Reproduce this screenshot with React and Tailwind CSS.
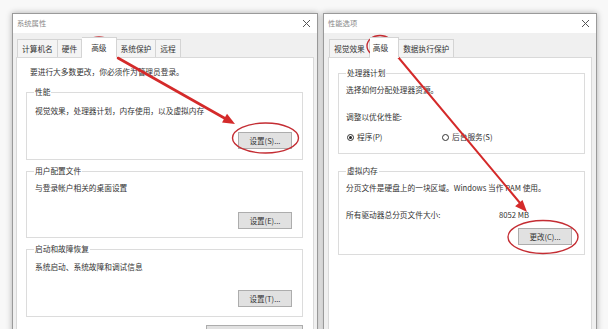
import React from 'react';

const font = "font-['Noto_Sans_CJK_SC','Noto_Sans',sans-serif]";

const CloseX = () => (
    <svg width="9" height="9" viewBox="0 0 9 9" className="shrink-0">
        <path d="M1 1 L8 8 M8 1 L1 8" stroke="#555" strokeWidth="1" />
    </svg>
);

const Tab = ({ label, active, className = '' }) => (
    <div
        className={`border border-[#d4d4d4] leading-[12px] text-[7.7px] text-[#333] whitespace-nowrap ${
            active
                ? 'bg-white border-b-white h-[21px] pt-[4px] -mb-px relative z-10'
                : 'bg-[#f4f4f4] border-b-0 h-[18px] pt-[3px] px-[4px]'
        } ${className}`}
    >
        {label}
    </div>
);

const Button = ({ label, className = '' }) => (
    <div
        className={`h-[17px] w-[54px] flex items-center justify-center bg-[#e1e1e1] border border-[#adadad] text-[7.5px] text-[#333] leading-none whitespace-nowrap ${className}`}
    >
        {label}
    </div>
);

const Group = ({ title, children, className = '' }) => (
    <fieldset className={`border border-[#dcdcdc] px-[7px] ${className}`}>
        <legend className="px-[1px] leading-[12px] text-[7.7px] text-[#333]">{title}</legend>
        {children}
    </fieldset>
);

const Line = ({ children, className = '' }) => (
    <div className={`leading-[12px] text-[7.7px] text-[#333] whitespace-nowrap ${className}`}>{children}</div>
);

const Radio = ({ checked, label }) => (
    <div className="flex items-center gap-[3px]">
        <div className="w-[7px] h-[7px] rounded-full border border-[#333] bg-white flex items-center justify-center">
            {checked && <div className="w-[3px] h-[3px] rounded-full bg-[#222]" />}
        </div>
        <Line>{label}</Line>
    </div>
);

const TitleBar = ({ title }) => (
    <div className="h-[19px] bg-white flex items-center justify-between pl-[4px] pr-[6px]">
        <span className="text-[7.3px] text-[#888] leading-none">{title}</span>
        <CloseX />
    </div>
);

const SystemProps = () => (
    <div className="w-[306px] h-[345px] shrink-0 flex flex-col border border-[#9a9a9a] bg-[#f0f0f0] shadow-[0_0_6px_rgba(0,0,0,0.3)]">
        <TitleBar title="系统属性" />
        <div className="flex-1 flex flex-col px-[3px] pt-[4px]">
            <div className="flex items-end h-[20px] pl-[1px]">
                <Tab label="计算机名" />
                <Tab label="硬件" className="border-l-0" />
                <Tab label="高级" active className="px-[9px] border-l-0" />
                <Tab label="系统保护" className="border-l-0" />
                <Tab label="远程" className="border-l-0" />
            </div>
            <div className="flex-1 bg-white border border-[#d9d9d9] flex flex-col pl-[9px] pr-[10px]">
                <Line className="mt-[8px] ml-[4px]">要进行大多数更改，你必须作为管理员登录。</Line>
                <Group title="性能" className="mt-[8px] pb-[10px]">
                    <Line className="mt-[7px] ml-px">视觉效果，处理器计划，内存使用，以及虚拟内存</Line>
                    <div className="flex justify-end mt-[15px] mr-[3px]">
                        <Button label="设置(S)..." />
                    </div>
                </Group>
                <Group title="用户配置文件" className="mt-[5px] pb-[8px]">
                    <Line className="mt-[5px] ml-px">与登录帐户相关的桌面设置</Line>
                    <div className="flex justify-end mt-[18px] mr-[3px]">
                        <Button label="设置(E)..." />
                    </div>
                </Group>
                <Group title="启动和故障恢复" className="mt-[5px] pb-[9px]">
                    <Line className="mt-[6px] ml-px">系统启动、系统故障和调试信息</Line>
                    <div className="flex justify-end mt-[17px] mr-[3px]">
                        <Button label="设置(T)..." />
                    </div>
                </Group>
                {/* only the top edge of this button shows in the shot */}
                <div className="flex justify-end mt-[8px]">
                    <div className="h-[17px] w-[97px] bg-[#e1e1e1] border border-[#adadad]" />
                </div>
            </div>
        </div>
    </div>
);

const PerfOptions = () => (
    <div className="w-[274px] h-[345px] shrink-0 flex flex-col border border-[#9a9a9a] bg-[#f0f0f0] shadow-[0_0_6px_rgba(0,0,0,0.3)]">
        <TitleBar title="性能选项" />
        <div className="flex-1 flex flex-col px-[4px] pt-[4px]">
            <div className="flex items-end h-[20px] pl-[1px]">
                <Tab label="视觉效果" />
                <Tab label="高级" active className="pl-[3px] pr-[10px] border-l-0" />
                <Tab label="数据执行保护" className="border-l-0" />
            </div>
            <div className="flex-1 bg-white border border-[#d9d9d9] flex flex-col pl-[9px] pr-[6px]">
                <Group title="处理器计划" className="mt-[9px] pb-[10px] px-[5px]">
                    <Line className="mt-[5px]">选择如何分配处理器资源。</Line>
                    <Line className="mt-[15px]">调整以优化性能:</Line>
                    <div className="flex mt-[8px] ml-px">
                        <div className="w-[95px]">
                            <Radio checked label="程序(P)" />
                        </div>
                        <Radio label="后台服务(S)" />
                    </div>
                </Group>
                <Group title="虚拟内存" className="mt-[11px] pb-[9px] px-[5px]">
                    <Line className="mt-[5px]">分页文件是硬盘上的一块区域。Windows 当作 RAM 使用。</Line>
                    <div className="flex mt-[15px]">
                        <Line className="w-[153px]">所有驱动器总分页文件大小:</Line>
                        <Line>8052 MB</Line>
                    </div>
                    <div className="flex justify-end mt-[7px] mr-[5px]">
                        <Button label="更改(C)..." />
                    </div>
                </Group>
            </div>
        </div>
    </div>
);

const Marks = () => (
    <svg className="absolute inset-0 pointer-events-none" width="608" height="329" viewBox="0 0 608 329">
        <g fill="none" stroke="#c42d33" strokeWidth="1.4">
            <ellipse cx="99" cy="47" rx="14" ry="10" />
            <ellipse cx="265.5" cy="138" rx="33" ry="15" />
            <ellipse cx="380" cy="46" rx="13" ry="10.5" />
            <ellipse cx="543" cy="237" rx="35" ry="16.5" />
        </g>
        <g stroke="#d42a2a" strokeLinecap="round">
            <line x1="118" y1="58" x2="226" y2="119" strokeWidth="2.6" />
            <line x1="398" y1="57" x2="520" y2="203" strokeWidth="2" />
        </g>
        <g fill="#d42a2a">
            <polygon points="235,124 222,122.5 227,113.7" />
            <polygon points="527,212 515.1,206.3 522.5,199.9" />
        </g>
    </svg>
);

const App = () => {
    return (
        <div className={`relative w-[608px] h-[329px] overflow-hidden bg-[#f8f8f8] ${font}`}>
            <div className="flex pt-[13px] pl-[12px] gap-[5px]">
                <SystemProps />
                <PerfOptions />
            </div>
            <Marks />
        </div>
    );
};

export default App;
